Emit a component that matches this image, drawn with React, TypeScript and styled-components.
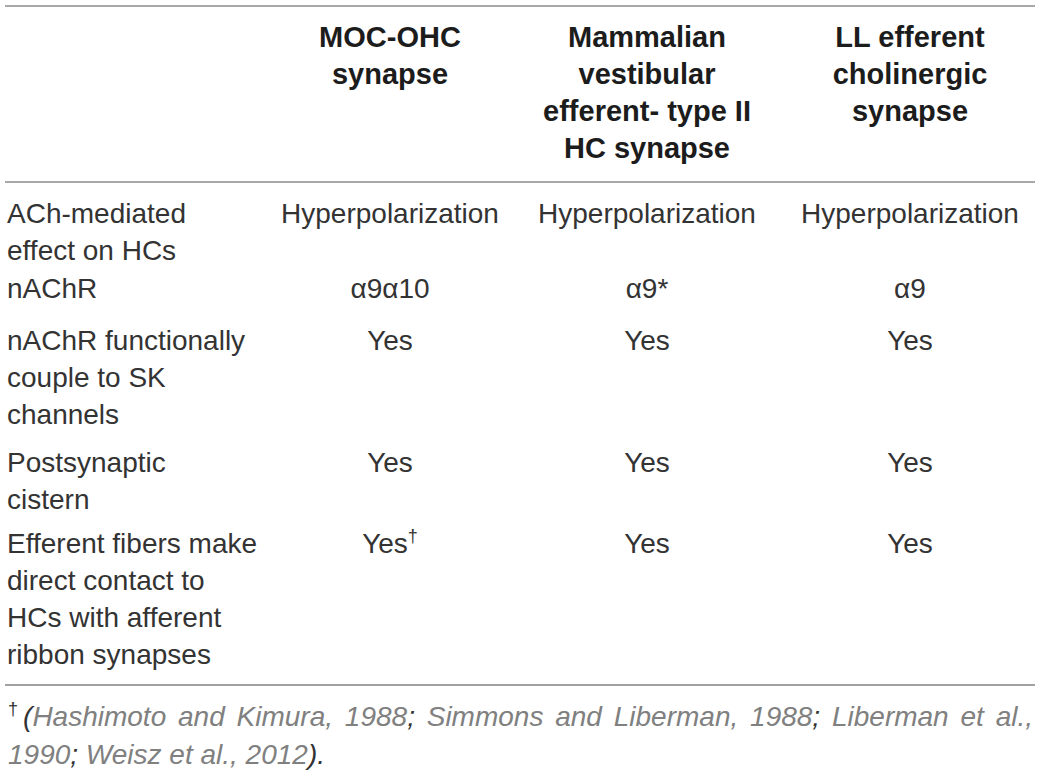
import React from "react";
import styled, { createGlobalStyle } from "styled-components";

const GlobalStyle = createGlobalStyle`
  html, body {
    margin: 0;
    padding: 0;
    background: #ffffff;
  }
  body {
    font-family: "Liberation Sans", Arial, Helvetica, sans-serif;
    color: #333333;
  }
`;

const Page = styled.div`
  width: 1030px;
  padding: 5px 5px 0 5px;
`;

const Table = styled.div`
  border-top: 2px solid #a8a8a8;
  border-bottom: 2px solid #a0a0a0;
`;

const Row = styled.div<{ $pt?: number; $pb?: number; $head?: boolean }>`
  display: grid;
  grid-template-columns: 266px 238px 276px 250px;
  padding-top: ${(p) => p.$pt ?? 0}px;
  padding-bottom: ${(p) => p.$pb ?? 0}px;
  border-bottom: ${(p) => (p.$head ? "2px solid #a8a8a8" : "none")};
`;

const HeadCell = styled.div`
  padding: 0 14px;
  font-weight: 700;
  font-size: 29px;
  line-height: 37.33px;
  color: #1c1c1c;
  text-align: center;
`;

const Cell = styled.div<{ $center?: boolean }>`
  padding: 0 2px;
  font-size: 28px;
  line-height: 37px;
  color: #333333;
  text-align: ${(p) => (p.$center ? "center" : "left")};
`;

const Line = styled.span`
  display: block;
  white-space: nowrap;
`;

const Sup = styled.sup`
  font-size: 18px;
  line-height: 0;
  vertical-align: 11px;
`;

const Footer = styled.p`
  margin: 0;
  padding: 12px 2px 0 3px;
  font-size: 28px;
  line-height: 38px;
  font-style: italic;
  text-align: justify;
  color: #333333;
`;

const FootMark = styled.sup`
  font-style: normal;
  font-size: 18px;
  line-height: 0;
  vertical-align: 11px;
  margin-right: 1px;
`;

const Cite = styled.span`
  color: #808080;
`;

type RowData = {
  label: string[];
  values: React.ReactNode[];
  pt: number;
  pb?: number;
};

const rows: RowData[] = [
  {
    label: ["ACh-mediated", "effect on HCs"],
    values: ["Hyperpolarization", "Hyperpolarization", "Hyperpolarization"],
    pt: 11.5,
  },
  { label: ["nAChR"], values: ["α9α10", "α9*", "α9"], pt: 1 },
  {
    label: ["nAChR functionally", "couple to SK", "channels"],
    values: ["Yes", "Yes", "Yes"],
    pt: 15,
  },
  { label: ["Postsynaptic", "cistern"], values: ["Yes", "Yes", "Yes"], pt: 11 },
  {
    label: [
      "Efferent fibers make",
      "direct contact to",
      "HCs with afferent",
      "ribbon synapses",
    ],
    values: [
      <>
        Yes<Sup>†</Sup>
      </>,
      "Yes",
      "Yes",
    ],
    pt: 7,
    pb: 11.5,
  },
];

export default function App() {
  return (
    <>
      <GlobalStyle />
      <Page>
        <Table>
          <Row $head $pt={11.5} $pb={13.2}>
            <HeadCell />
            <HeadCell>MOC-OHC synapse</HeadCell>
            <HeadCell>Mammalian vestibular efferent- type II HC synapse</HeadCell>
            <HeadCell>LL efferent cholinergic synapse</HeadCell>
          </Row>
          {rows.map((r, i) => (
            <Row key={i} $pt={r.pt} $pb={r.pb}>
              <Cell>
                {r.label.map((l, k) => (
                  <Line key={k}>{l}</Line>
                ))}
              </Cell>
              {r.values.map((v, j) => (
                <Cell key={j} $center>
                  {v}
                </Cell>
              ))}
            </Row>
          ))}
        </Table>
        <Footer>
          <FootMark>†</FootMark>(<Cite>Hashimoto and Kimura, 1988</Cite>;{" "}
          <Cite>Simmons and Liberman, 1988</Cite>;{" "}
          <Cite>Liberman et al., 1990</Cite>; <Cite>Weisz et al., 2012</Cite>).
        </Footer>
      </Page>
    </>
  );
}
